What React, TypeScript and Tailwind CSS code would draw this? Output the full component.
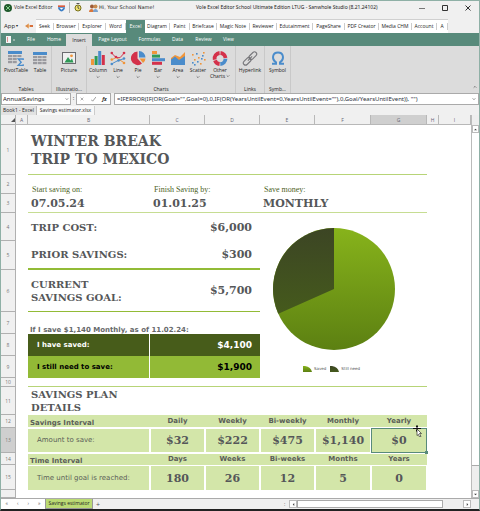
import type { ReactNode } from 'react';

const appTabs = [
  'Seek', 'Browser', 'Explorer', 'Word', 'Excel', 'Diagram', 'Paint', 'Briefcase',
  'Magic Note', 'Reviewer', 'Edutainment', 'PageShare', 'PDF Creator', 'Media CHM', 'Account', 'A',
];

const menuTabs = ['File', 'Home', 'Insert', 'Page Layout', 'Formulas', 'Data', 'Review', 'View'];

const formula =
  '=IFERROR(IF(OR(Goal="",Goal=0),0,IF(OR(YearsUntilEvent=0,YearsUntilEvent=""),0,Goal/YearsUntilEvent)), "")';

const intervals = ['Daily', 'Weekly', 'Bi-weekly', 'Monthly', 'Yearly'];
const amounts = ['$32', '$222', '$475', '$1,140', '$0'];
const units = ['Days', 'Weeks', 'Bi-weeks', 'Months', 'Years'];
const counts = ['180', '26', '12', '5', '0'];

const BLUE = '#4a8ccb';
const RED = '#d4314a';
const GREEN = '#2f9a57';
const ORANGE = '#f0953a';
const GRAY = '#9a9a9f';

function Icon({ children }: { children: ReactNode }) {
  return (
    <svg viewBox="0 0 16 15" className="h-[15px] w-4" aria-hidden="true">
      {children}
    </svg>
  );
}

function TableRows({ x, y, w }: { x: number; y: number; w: number }) {
  const step = w / 3;
  return (
    <>
      <rect x={x} y={y} width={w} height="3" fill={BLUE} />
      {[4, 7, 10].map((dy) =>
        [0, 1, 2].map((c) => (
          <rect key={`${dy}-${c}`} x={x + c * step} y={y + dy} width={step - 0.6} height="2.2" fill={GRAY} />
        )),
      )}
    </>
  );
}

const PivotIcon = () => (
  <Icon>
    <TableRows x={0} y={0} w={14} />
    <rect x="9" y="6.6" width="7" height="8.4" fill="#dcdcdc" />
    <path d="M15.2 9V8h-5l3 3.2-3 3.1h5v-1" fill="none" stroke={BLUE} strokeWidth="1.3" />
  </Icon>
);

const TableIcon = () => (
  <Icon>
    <TableRows x={1} y={1} w={14} />
  </Icon>
);

const PictureIcon = () => (
  <Icon>
    <rect x="1.5" y="1.5" width="13" height="11" fill="#f0f0f0" stroke="#6c6c70" />
    <path d="M3.500 11.500l3.500-5.500 2.500 3.500 1.500-2 1.500 4z" fill={GREEN} />
    <circle cx="10.5" cy="4.8" r="1.4" fill={ORANGE} />
  </Icon>
);

const ColumnIcon = () => (
  <Icon>
    <rect x="1" y="8" width="3" height="6" fill={ORANGE} />
    <rect x="4.6" y="5" width="3" height="9" fill={GREEN} />
    <rect x="8.2" y="0" width="3" height="14" fill={BLUE} />
    <rect x="11.8" y="4" width="3" height="10" fill={RED} />
  </Icon>
);

const LineIcon = () => (
  <Icon>
    <path d="M1.5 2L6 6.5l4 .2 4.5-5" fill="none" stroke={RED} />
    <path d="M1.5 9L6 6.5 14.5 12" fill="none" stroke={ORANGE} />
    <path d="M1.5 13L8 9.5l6.5-2" fill="none" stroke={BLUE} />
    <g fill={RED}><circle cx="1.8" cy="2" r="1.3" /><circle cx="6" cy="6" r="1.3" /><circle cx="14" cy="2" r="1.3" /></g>
    <g fill={ORANGE}><circle cx="1.8" cy="8.5" r="1.3" /><circle cx="14" cy="12" r="1.3" /></g>
    <g fill={BLUE}><circle cx="1.8" cy="13" r="1.3" /><circle cx="8.5" cy="9.5" r="1.3" /><circle cx="14" cy="7.5" r="1.3" /></g>
  </Icon>
);

const PieIcon = () => (
  <Icon>
    <path d="M7.5 .5A6.8 6.8 0 1 0 12 12.6L7.500 7.500z" fill={RED} />
    <path d="M9 0a6.500 6.500 0 0 1 6.500 6.500H9z" fill={BLUE} />
    <path d="M9.500 7.500H15.500a6 6 0 0 1-2.500 4.500z" fill={ORANGE} />
  </Icon>
);

const BarIcon = () => (
  <Icon>
    <rect x="2" y="0" width="5" height="3" fill={ORANGE} />
    <rect x="2" y="3.6" width="8" height="3" fill={GREEN} />
    <rect x="2" y="7.2" width="13" height="3" fill={BLUE} />
    <rect x="2" y="10.8" width="10" height="3" fill={RED} />
  </Icon>
);

const AreaIcon = () => (
  <Icon>
    <path d="M1 7l4-3 5 2 5-5v13H1z" fill={ORANGE} />
    <path d="M1 8.5l4-3L9 9l6-4v9H1z" fill={BLUE} />
  </Icon>
);

const ScatterIcon = () => (
  <Icon>
    {[[2, 3], [8, 6], [4, 8], [14, 8], [10, 12], [13, 1]].map(([x, y]) => (
      <rect key={`${x}-${y}`} x={x} y={y} width="1.6" height="1.6" fill={ORANGE} />
    ))}
    {[[6, 2], [12, 4], [2, 11], [7, 10], [11, 7], [4, 13]].map(([x, y]) => (
      <rect key={`${x}-${y}`} x={x} y={y} width="1.6" height="1.6" fill={BLUE} />
    ))}
  </Icon>
);

const OtherIcon = () => (
  <Icon>
    <g fill="none" strokeWidth="3.8">
      <path d="M7.600 2A5.500 5.500 0 0 0 2.700 8.600" stroke={RED} />
      <path d="M8.500 2A5.500 5.500 0 0 1 13.500 7" stroke={RED} />
      <path d="M3 9.300A5.500 5.500 0 0 0 7.600 13" stroke={RED} />
      <path d="M8.300 13A5.500 5.500 0 0 0 13.500 7.700" stroke={BLUE} />
    </g>
  </Icon>
);

const LinkIcon = () => (
  <Icon>
    <g fill="none" stroke="#77777b" strokeWidth="1.1" transform="rotate(-45 8 7.5)">
      <rect x="-0.5" y="5.3" width="9" height="4.4" rx="2.2" />
      <rect x="7.5" y="5.3" width="9" height="4.4" rx="2.2" />
      <path d="M5 7.5h6" />
    </g>
  </Icon>
);

const OmegaIcon = () => (
  <Icon>
    <path d="M2 12.8h4v-1.500C1.200 8 2.500 1.500 8 1.500s6.800 6.500 2 9.800v1.500h4" fill="none" stroke={BLUE} strokeWidth="2" />
  </Icon>
);

function Chevron() {
  return (
    <svg viewBox="0 0 6 4" className="h-1 w-1" aria-hidden="true">
      <path d="M1 1l2 2 2-2" fill="none" stroke="#555" />
    </svg>
  );
}

function Tool({ icon, label, menu }: { icon: ReactNode; label: string; menu?: boolean }) {
  return (
    <button type="button" className="flex w-5 flex-col items-center gap-px whitespace-nowrap leading-[7px]">
      {icon}
      <span>{label}</span>
      {menu && <Chevron />}
    </button>
  );
}

function Group({ title, className, row, children }: { title: string; className: string; row: string; children: ReactNode }) {
  return (
    <div className={`flex flex-col justify-between border-r border-[#c9c9c9] pt-[5px] ${className}`}>
      <div className={`flex items-start ${row}`}>{children}</div>
      <div className="text-center leading-[8px]">{title}</div>
    </div>
  );
}

function TitleBar() {
  return (
    <header className="flex h-[18px] shrink-0 items-center bg-[#f0f0f0] pb-[5px] pl-[3px] text-[#222]">
      <svg viewBox="0 0 8 8" className="mr-[2px] h-2 w-2" aria-hidden="true">
        <circle cx="4" cy="4" r="4" fill="#1f5a2c" />
        <path d="M2 2l4 4M6 2L2 6" stroke="#7fd08a" />
      </svg>
      <span className="w-11">Vole Excel Editor</span>
      <svg viewBox="0 0 8 8" className="h-2 w-[7px]" aria-hidden="true">
        <path d="M0 1h8v2H0z" fill="#d95b3c" />
        <path d="M0 3h8c0 3-2 4-4 5C2 7 0 6 0 3z" fill="#3c7fc6" />
        <path d="M2 4h4L4 6z" fill="#fff" />
      </svg>
      <span className="mx-1 h-[11px] w-px bg-[#b5b5b5]" />
      <svg viewBox="0 0 8 9" className="mr-[7px] h-[9px] w-2" aria-hidden="true">
        <circle cx="4" cy="5" r="3" fill="#f2e36b" stroke="#77701c" />
        <path d="M2.5.5h3M4 3v2l1.5 1" stroke="#555" fill="none" />
      </svg>
      <svg viewBox="0 0 9 8" className="mr-px h-2 w-[9px]" aria-hidden="true">
        <circle cx="3" cy="2.5" r="2" fill="#9d5a36" />
        <circle cx="6.5" cy="2.5" r="2" fill="#c78a4e" />
        <path d="M0 8c0-4 5-4 5 0z" fill="#d9773b" />
        <path d="M4 8c0-4 5-4 5 0z" fill="#7aa3cf" />
      </svg>
      <span className="font-['DejaVu_Sans',sans-serif]">Hi, Your School Name!</span>
      <h1 className="flex-1 text-center font-['Noto_Sans',sans-serif]">
        Vole Excel Editor School Ultimate Edition LTUG - Sanwhole Studio (8.21.24102)
      </h1>
      <div className="flex w-[60px] items-center justify-between pr-2">
        <button type="button" aria-label="Minimize">
          <svg viewBox="0 0 6 6" className="h-[6px] w-[6px]"><path d="M0 3.5h6" stroke="#777" /></svg>
        </button>
        <button type="button" aria-label="Maximize">
          <svg viewBox="0 0 6 6" className="h-[6px] w-[6px]"><path d="M.5.5h5v5h-5z" fill="none" stroke="#333" /></svg>
        </button>
        <button type="button" aria-label="Close">
          <svg viewBox="0 0 6 6" className="h-[6px] w-[6px]"><path d="M.5.5l5 5M5.5.5l-5 5" stroke="#333" /></svg>
        </button>
      </div>
    </header>
  );
}

function AppTabs() {
  return (
    <nav className="flex h-[14px] shrink-0 bg-[#f0f0f0] text-[#222]">
      <button type="button" className="flex w-5 items-center gap-px pl-[3px] text-[6px]">
        App <span className="text-[4px]">▾</span>
      </button>
      <div className="flex w-[15px] items-center justify-center">
        <svg viewBox="0 0 8 8" className="h-2 w-2" aria-hidden="true">
          <path d="M0 4l3-2v4z" fill="#d98b4a" />
          <path d="M3 1l2 3-2 3z" fill="#e8a35f" />
          <path d="M5 3h3v2H5z" fill="#d9703a" />
        </svg>
      </div>
      <div className="grid grid-cols-[18px_25px_27px_20px_19px_25px_20px_27px_33px_27px_36px_32px_34px_33px_25px_11px] border-t border-[#d0d0d0] bg-white">
        {appTabs.map((tab) => (
          <a
            key={tab}
            href="#"
            className={
              tab === 'Excel'
                ? 'bg-[#588a7b] text-center leading-[13px] text-white'
                : 'my-[3px] border-r border-[#ccc] text-center leading-[7px] whitespace-nowrap'
            }
          >
            {tab}
          </a>
        ))}
      </div>
    </nav>
  );
}

function MenuBar() {
  return (
    <nav className="flex h-[13px] shrink-0 bg-[#588a7b] text-white">
      <div className="flex w-[19px] items-center pl-[5px]">
        <svg viewBox="0 0 9 7" className="h-[7px] w-[9px]" aria-hidden="true">
          <path d="M0 0h5v7H0z" fill="#f5f5f5" />
          <path d="M1 1h1v5H1z" fill="#d98f8f" />
          <path d="M7 4h2" stroke="#ddd" />
        </svg>
      </div>
      <div className="grid grid-cols-[22px_24px_26px_41px_33px_23px_29px_21px]">
        {menuTabs.map((tab) => (
          <a
            key={tab}
            href="#"
            className={
              tab === 'Insert'
                ? 'mt-px bg-[#dcdcdc] text-center leading-3 text-[#222]'
                : 'text-center leading-[13px] whitespace-nowrap'
            }
          >
            {tab}
          </a>
        ))}
      </div>
    </nav>
  );
}

function Ribbon() {
  return (
    <section className="relative flex h-[47px] shrink-0 bg-[#dcdcdc] text-[#222]">
      <Group title="Tables" className="w-[51px]" row="gap-1 pl-[5px]">
        <Tool icon={<PivotIcon />} label="PivotTable" />
        <Tool icon={<TableIcon />} label="Table" />
      </Group>
      <Group title="Illustratio..." className="w-[35px]" row="justify-center">
        <Tool icon={<PictureIcon />} label="Picture" />
      </Group>
      <Group title="Charts" className="w-[149px]" row="pl-px">
        <Tool icon={<ColumnIcon />} label="Column" menu />
        <Tool icon={<LineIcon />} label="Line" menu />
        <Tool icon={<PieIcon />} label="Pie" menu />
        <Tool icon={<BarIcon />} label="Bar" menu />
        <Tool icon={<AreaIcon />} label="Area" menu />
        <Tool icon={<ScatterIcon />} label="Scatter" menu />
        <button type="button" className="flex w-6 flex-col items-center gap-px leading-[6px]">
          <OtherIcon />
          <span>
            Other
            <span className="flex items-center gap-px">Charts <Chevron /></span>
          </span>
        </button>
      </Group>
      <Group title="Links" className="w-[29px]" row="justify-center">
        <Tool icon={<LinkIcon />} label="Hyperlink" />
      </Group>
      <Group title="Symb..." className="w-[26px]" row="justify-center">
        <Tool icon={<OmegaIcon />} label="Symbol" />
      </Group>
      <button type="button" aria-label="Collapse ribbon" className="absolute right-[2px] bottom-1 rotate-180">
        <Chevron />
      </button>
    </section>
  );
}

function FormulaBar() {
  return (
    <div className="flex h-3 shrink-0 bg-[#f0f0f0] text-[6px] text-[#222]">
      <div className="flex w-[70px] items-center border border-[#aaa] bg-white pr-px">
        <input
          aria-label="Name box"
          defaultValue="AnnualSavings"
          className="w-full min-w-0 pl-px font-['Noto_Sans',sans-serif] leading-[10px] outline-none"
        />
        <Chevron />
      </div>
      <span className="w-[5px] text-center leading-[11px]">:</span>
      <div className="mr-[3px] flex w-[35px] items-center justify-around border border-[#aaa] bg-white">
        <button type="button" aria-label="Cancel">
          <svg viewBox="0 0 6 6" className="h-1 w-1"><path d="M1 1l4 4M5 1L1 5" stroke="#888" /></svg>
        </button>
        <button type="button" aria-label="Enter">
          <svg viewBox="0 0 6 6" className="h-[5px] w-[5px]"><path d="M0 3l2 2 4-5" fill="none" stroke="#888" /></svg>
        </button>
        <button type="button" className="text-[5px] font-bold italic leading-[8px]">fx</button>
      </div>
      <div className="flex flex-1 items-center border border-[#aaa] bg-white pr-[2px]">
        <input
          aria-label="Formula"
          defaultValue={formula}
          className="w-full min-w-0 pl-[2px] font-['Noto_Sans',sans-serif] leading-[10px] text-[#2b3340] outline-none"
        />
        <Chevron />
      </div>
    </div>
  );
}

function PieChart() {
  return (
    <svg viewBox="0 0 124 124" className="h-[124px] w-[124px]" role="img" aria-label="Saved and still need">
      <defs>
        <linearGradient id="saved" x1="0" y1="0" x2="0" y2="1">
          <stop offset="0" stopColor="#87b31b" />
          <stop offset="1" stopColor="#5c8012" />
        </linearGradient>
        <linearGradient id="need" x1="0" y1="0" x2="0" y2="1">
          <stop offset="0" stopColor="#3c4524" />
          <stop offset="1" stopColor="#455a1c" />
        </linearGradient>
      </defs>
      <circle cx="62" cy="62" r="61" fill="url(#saved)" />
      <path d="M62 62V1A61 61 0 0 0 6.3 86.800z" fill="url(#need)" />
    </svg>
  );
}

function Swatch({ fill }: { fill: string }) {
  return (
    <svg viewBox="0 0 9 6" className="h-[6px] w-[9px]" aria-hidden="true">
      <path d="M0 0h2q6 1 7 6H0z" fill={fill} />
    </svg>
  );
}

function RowHead({ n, active }: { n?: number; active?: boolean }) {
  return (
    <th
      scope="row"
      className={`border-r border-b border-[#b0b0b0] align-middle font-['Open_Sans',sans-serif] text-[5px] leading-[6px] font-normal text-[#777] ${active ? 'bg-[#cfcfcf]' : 'bg-[#f0f0f0]'}`}
    >
      {n}
    </th>
  );
}

const serif = "font-['DejaVu_Serif',serif] font-bold text-[#555759]";
const sans = "font-['DejaVu_Sans',sans-serif]";
const headCell = `${sans} bg-[#d3e6a9] text-[7px] font-bold text-[#5b5e58]`;

function Sheet() {
  return (
    <div className="flex min-h-0 flex-1 bg-white">
      <div className="min-w-0 flex-1 overflow-hidden">
        <table className="w-full table-fixed border-separate border-spacing-0">
          <colgroup>
            <col className="w-[15px]" />
            <col className="w-3" />
            <col className="w-[122px]" />
            <col className="w-[55px]" />
            <col className="w-[55px]" />
            <col className="w-[55px]" />
            <col className="w-[56px]" />
            <col className="w-[56px]" />
            <col className="w-3" />
            <col />
          </colgroup>
          <thead>
            <tr className="h-[10px] text-[5px] leading-[8px] text-[#667]">
              <th className="border-r border-b border-[#b0b0b0] bg-[#f0f0f0]">
                <svg viewBox="0 0 4 4" className="ml-auto h-1 w-1" aria-hidden="true"><path d="M4 0v4H0z" fill="#555" /></svg>
              </th>
              {['A', 'B', 'C', 'D', 'E', 'F', 'G', 'H', 'I'].map((c) => (
                <th
                  key={c}
                  scope="col"
                  className={`border-r border-b border-[#b8b8b8] font-normal ${c === 'G' ? 'bg-[#cfcfcf]' : 'bg-[#f0f0f0]'}`}
                >
                  {c}
                </th>
              ))}
            </tr>
          </thead>
          <tbody>
            <tr className="h-[50px]">
              <RowHead n={1} />
              <td />
              <td colSpan={6} className={`border-b border-[#b7d477] pl-[3px] text-[14px] leading-[18px] ${serif}`}>
                WINTER BREAK<br />TRIP TO MEXICO
              </td>
            </tr>
            <tr className="h-[19px] align-bottom font-['Liberation_Serif',serif] text-[8px] leading-[8px] text-[#4d5f26]">
              <RowHead n={2} />
              <td />
              <td className="pl-1">Start saving on:</td>
              <td colSpan={2} className="pl-1">Finish Saving by:</td>
              <td colSpan={3} className="pl-1">Save money:</td>
            </tr>
            <tr className={`h-[19px] text-[11px] leading-[13px] ${serif}`}>
              <RowHead n={3} />
              <td />
              <td className="border-b border-[#c6dd92] pl-[3px]">07.05.24</td>
              <td colSpan={2} className="border-b border-[#c6dd92] pl-[3px]">01.01.25</td>
              <td colSpan={3} className="border-b border-[#c6dd92] pl-[3px]">MONTHLY</td>
            </tr>
            <tr className={`h-7 text-[10px] leading-[13px] ${serif}`}>
              <RowHead n={4} />
              <td />
              <td className="pl-[3px]">TRIP COST:</td>
              <td colSpan={2} className="pr-2 text-right text-[11px]">$6,000</td>
              <td colSpan={3} rowSpan={7} className="border-b border-[#b7d477] pt-[14px] pr-5 align-top">
                <div className="flex flex-col items-center">
                  <PieChart />
                  <div className={`mt-[15px] flex items-center gap-[2px] pr-1 text-[4px] font-normal leading-[6px] text-[#555] ${sans}`}>
                    <Swatch fill="url(#saved)" />
                    <span className="mr-[2px]">Saved</span>
                    <Swatch fill="url(#need)" />
                    <span>Still need</span>
                  </div>
                </div>
              </td>
            </tr>
            <tr className={`h-[29px] text-[10px] leading-[13px] ${serif}`}>
              <RowHead n={5} />
              <td />
              <td className="border-b-2 border-[#92bb36] pl-[3px]">PRIOR SAVINGS:</td>
              <td colSpan={2} className="border-b-2 border-[#92bb36] pr-2 text-right text-[11px]">$300</td>
            </tr>
            <tr className={`h-[42px] text-[10px] leading-[13px] ${serif}`}>
              <RowHead n={6} />
              <td />
              <td className="border-b border-[#92bb36] pl-[3px]">CURRENT<br />SAVINGS GOAL:</td>
              <td colSpan={2} className="border-b border-[#92bb36] pr-2 text-right text-[11px]">$5,700</td>
            </tr>
            <tr className="h-[22px]">
              <RowHead n={7} />
              <td />
              <td colSpan={3} className={`pl-[2px] align-bottom text-[7px] leading-[7px] font-bold text-[#66696b] ${sans}`}>
                If I save $1,140 Monthly, as of 11.02.24:
              </td>
            </tr>
            <tr className={`h-[22px] text-[7px] leading-[9px] font-bold text-white ${sans}`}>
              <RowHead n={8} />
              <td />
              <td className="border-r border-white bg-[#475c1a] pl-[9px]">I have saved:</td>
              <td colSpan={2} className="bg-[#475c1a] pr-2 text-right text-[9px]">$4,100</td>
            </tr>
            <tr className={`h-[22px] text-[7px] leading-[9px] font-bold text-black ${sans}`}>
              <RowHead n={9} />
              <td />
              <td className="border-r border-white bg-[#92ba36] pl-[9px]">I still need to save:</td>
              <td colSpan={2} className="bg-[#92ba36] pr-2 text-right text-[9px]">$1,900</td>
            </tr>
            <tr className="h-[9px]">
              <RowHead n={10} />
              <td />
              <td colSpan={3} className="border-b border-[#b7d477]" />
            </tr>
            <tr className="h-7">
              <RowHead n={11} />
              <td />
              <td colSpan={6} className={`pl-[3px] text-[10px] leading-[13px] ${serif}`}>
                SAVINGS PLAN<br />DETAILS
              </td>
            </tr>
            <tr className="h-[13px]">
              <RowHead n={12} />
              <td />
              <td className={`${headCell} border-b border-white pl-[2px] align-bottom leading-[7px]`}>Savings Interval</td>
              {intervals.map((v) => (
                <td key={v} className={`${headCell} border-b border-white text-center leading-[9px]`}>{v}</td>
              ))}
            </tr>
            <tr className="h-[25px]">
              <RowHead n={13} active />
              <td />
              <td className={`border-y border-r border-white bg-[#d3e6a9] pl-[9px] text-[7px] text-[#5b5e58] ${sans}`}>Amount to save:</td>
              {amounts.map((v) => (
                <td key={v} className={`relative border border-white bg-[#d3e6a9] text-center text-[11px] leading-[13px] ${serif}`}>
                  {v}
                  {v === '$0' && (
                    <span className="absolute -inset-px border border-[#588a7b]">
                      <span className="absolute -right-[2px] -bottom-[2px] h-[3px] w-[3px] bg-[#588a7b]" />
                      <svg viewBox="0 0 9 12" className="absolute -top-1 right-1 h-3 w-[9px]" aria-hidden="true">
                        <path d="M4 0v7M0 3.5h8M3 1.5h2M3 5.5h2" stroke="#111" />
                        <path d="M4 4l4.5 4.5H6.5L8 11.5 6.5 12 5.5 9.5 4 10.5z" fill="#fff" stroke="#111" strokeWidth=".6" />
                      </svg>
                    </span>
                  )}
                </td>
              ))}
            </tr>
            <tr className="h-3">
              <RowHead n={14} />
              <td />
              <td className={`${headCell} border-t border-white pl-[2px] align-bottom leading-[7px]`}>Time Interval</td>
              {units.map((v) => (
                <td key={v} className={`${headCell} border-t border-white text-center leading-[9px]`}>{v}</td>
              ))}
            </tr>
            <tr className="h-[25px]">
              <RowHead n={15} />
              <td />
              <td className={`border-t border-r border-white bg-[#d3e6a9] pl-[9px] text-[7px] text-[#5b5e58] ${sans}`}>Time until goal is reached:</td>
              {counts.map((v) => (
                <td key={v} className={`border-x border-t border-white bg-[#d3e6a9] text-center text-[11px] leading-[13px] ${serif}`}>{v}</td>
              ))}
            </tr>
            <tr className="h-2">
              <RowHead />
            </tr>
          </tbody>
        </table>
      </div>
      <div className="flex w-2 flex-col border-l border-[#bbb] bg-[#eee] pt-[10px]">
        <button type="button" aria-label="Scroll up" className="flex h-2 items-center justify-center border border-[#bbb] bg-white">
          <svg viewBox="0 0 4 4" className="h-[3px] w-[3px]"><path d="M0 3l2-2 2 2z" fill="#444" /></svg>
        </button>
        <div className="flex-1 border-b border-[#aaa] bg-white" />
        <div className="h-6" />
        <button type="button" aria-label="Scroll down" className="flex h-2 items-center justify-center border border-[#bbb] bg-white">
          <svg viewBox="0 0 4 4" className="h-[3px] w-[3px]"><path d="M0 1l2 2 2-2z" fill="#444" /></svg>
        </button>
      </div>
    </div>
  );
}

function SheetTabs() {
  return (
    <footer className="flex h-[11px] shrink-0 items-center border-t border-[#aaa] bg-[#f0f0f0] text-[#555]">
      <div className="flex h-full w-11 items-center justify-around bg-white text-[5px]">
        <button type="button" aria-label="First sheet">«</button>
        <button type="button" aria-label="Previous sheet">‹</button>
        <button type="button" aria-label="Next sheet">›</button>
        <button type="button" aria-label="Last sheet">»</button>
      </div>
      <button type="button" className="h-full w-12 border border-t-0 border-[#999] bg-[#bbdb74] leading-[9px] whitespace-nowrap text-[#222]">
        Savings estimator
      </button>
      <button type="button" aria-label="Add sheet" className="w-[10px] text-[7px] leading-[9px]">+</button>
      <div className="flex-1" />
      <span className="w-[5px] leading-[9px]">:</span>
      <div className="mr-2 flex h-2 w-[182px] bg-[#eee]">
        <button type="button" aria-label="Scroll left" className="flex w-2 items-center justify-center border border-[#bbb] bg-white">
          <svg viewBox="0 0 4 4" className="h-[3px] w-[3px]"><path d="M3 0L1 2l2 2z" fill="#444" /></svg>
        </button>
        <div className="w-[146px] border border-[#aaa] bg-white" />
        <div className="flex-1" />
        <button type="button" aria-label="Scroll right" className="flex w-2 items-center justify-center border border-[#bbb] bg-white">
          <svg viewBox="0 0 4 4" className="h-[3px] w-[3px]"><path d="M1 0l2 2-2 2z" fill="#444" /></svg>
        </button>
      </div>
    </footer>
  );
}

export default function App() {
  return (
    <div className="flex h-screen flex-col border border-b-2 border-[#8fb0a6] border-b-[#222] bg-[#f0f0f0] font-['Open_Sans',sans-serif] text-[5px]">
      <TitleBar />
      <AppTabs />
      <MenuBar />
      <Ribbon />
      <FormulaBar />
      <div className="flex h-[10px] shrink-0 pt-px leading-[9px] text-[#222]">
        <button type="button" className="w-9 border-r border-[#bbb] bg-[#e2e2e2]">Book1 - Excel</button>
        <button type="button" className="w-[58px] border-r border-[#ccc] bg-[#f8f8f8]">Savings estimator.xlsx</button>
      </div>
      <Sheet />
      <SheetTabs />
    </div>
  );
}
